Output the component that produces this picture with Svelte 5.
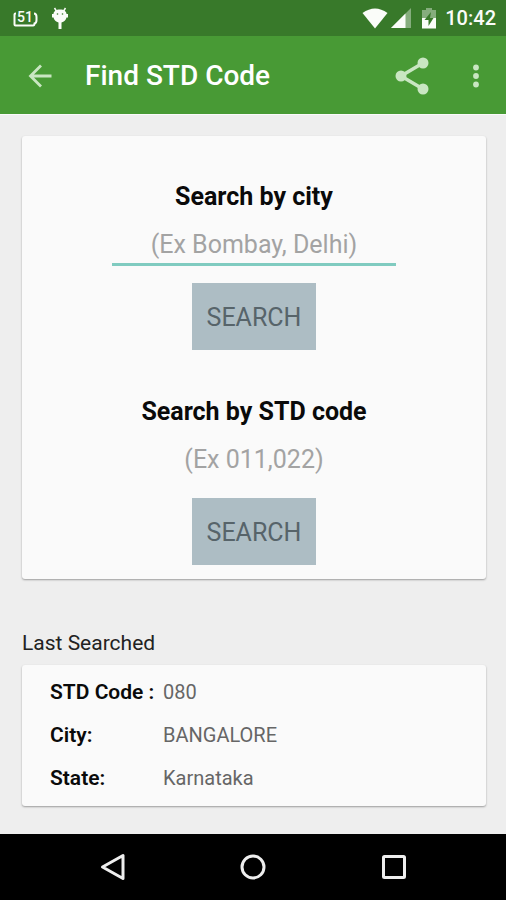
<script>
  let city = $state('')
  let code = $state('')

  // most recent lookup, shown below the search card
  let lastSearched = $state([
    { label: 'STD Code :', value: '080' },
    { label: 'City:', value: 'BANGALORE' },
    { label: 'State:', value: 'Karnataka' },
  ])
</script>

<div class="screen">
  <div class="status-bar">
    <div class="status-group">
      <svg class="speed" width="25" height="26" viewBox="0 0 25 26">
        <path
          d="M3 8.500H2.500Q1.500 8.500 1.500 9.500V19.500Q1.500 20.500 2.500 20.500H20Q21.500 20.500 21.500 18.500Q23.500 18 23.500 15V12Q23.500 8.500 21 8.500"
          fill="none"
          stroke="currentColor"
          stroke-width="2"
        />
        <text x="12" y="17" text-anchor="middle">51</text>
      </svg>
      <svg width="18" height="24" viewBox="0 0 18 24">
        <path
          d="M3.500 2L6 6M14.500 2L12 6"
          stroke="currentColor"
          stroke-width="1.500"
        />
        <path
          d="M9 3.500C13 3.500 15.500 5.500 15.500 8H17V11.500H15.500C15 14 13 16 10.500 16.500V23H7.500V16.500C5 16 3 14 2.500 11.500H1V8H2.500C2.500 5.500 5 3.500 9 3.500Z"
          fill="currentColor"
        />
        <circle cx="6.500" cy="8" r=".8" fill="#38792a" />
        <circle cx="11.500" cy="8" r=".8" fill="#38792a" />
      </svg>
    </div>
    <div class="status-group right">
      <svg width="26" height="21" viewBox="0 0 26 21">
        <path d="M13 20.500L.5 5Q13-4 25.500 5Z" fill="currentColor" />
      </svg>
      <svg width="20" height="21" viewBox="0 0 20 21">
        <path d="M20 0V20H0Z" fill="currentColor" opacity=".4" />
        <path d="M14.500 5.500V20H0Z" fill="currentColor" />
      </svg>
      <svg class="battery" width="14" height="21" viewBox="0 0 14 21">
        <path
          d="M4 0H10V2H14V10H0V2H4Z"
          fill="currentColor"
          opacity=".4"
        />
        <path d="M0 10H14V20.500H0Z" fill="currentColor" />
        <path d="M9 4L2.500 12H6.500V18L11.500 10H8Z" fill="#38792a" />
      </svg>
      <span class="clock">10:42</span>
    </div>
  </div>

  <header class="app-bar">
    <button class="icon-button" type="button" aria-label="Back">
      <svg width="24" height="24" viewBox="0 0 24 24">
        <path
          d="M23.500 12H3M13 1.500L2.500 12L13 22.500"
          fill="none"
          stroke="currentColor"
          stroke-width="2.800"
        />
      </svg>
    </button>
    <h1>Find STD Code</h1>
    <button class="icon-button share" type="button" aria-label="Share">
      <svg width="36" height="40" viewBox="0 0 36 40">
        <path
          d="M29 7L7 20L29 33"
          fill="none"
          stroke="currentColor"
          stroke-width="3.500"
        />
        <circle cx="29" cy="7" r="5.500" fill="currentColor" />
        <circle cx="7" cy="20" r="5.500" fill="currentColor" />
        <circle cx="29" cy="33" r="5.500" fill="currentColor" />
      </svg>
    </button>
    <button class="icon-button" type="button" aria-label="More options">
      <svg width="8" height="24" viewBox="0 0 8 24">
        <circle cx="4" cy="3.500" r="2.900" fill="currentColor" />
        <circle cx="4" cy="12" r="2.900" fill="currentColor" />
        <circle cx="4" cy="20.500" r="2.900" fill="currentColor" />
      </svg>
    </button>
  </header>

  <main>
    <div class="card search-card">
      <form onsubmit={(e) => e.preventDefault()}>
        <label for="city">Search by city</label>
        <input
          id="city"
          class="active"
          type="text"
          placeholder="(Ex Bombay, Delhi)"
          bind:value={city}
        />
        <button class="search-button" type="submit">SEARCH</button>
      </form>
      <form onsubmit={(e) => e.preventDefault()}>
        <label for="code">Search by STD code</label>
        <input
          id="code"
          type="text"
          inputmode="numeric"
          placeholder="(Ex 011,022)"
          bind:value={code}
        />
        <button class="search-button" type="submit">SEARCH</button>
      </form>
    </div>

    <h2>Last Searched</h2>
    <dl class="card result-card">
      {#each lastSearched as row}
        <div class="row">
          <dt>{row.label}</dt>
          <dd>{row.value}</dd>
        </div>
      {/each}
    </dl>
  </main>

  <nav class="nav-bar">
    <button type="button" aria-label="Navigate back">
      <svg width="28" height="28" viewBox="0 0 28 28">
        <path d="M25 2.500V25.500L4.500 14Z" />
      </svg>
    </button>
    <button type="button" aria-label="Home">
      <svg width="28" height="28" viewBox="0 0 28 28">
        <circle cx="14" cy="14" r="11" />
      </svg>
    </button>
    <button type="button" aria-label="Recent apps">
      <svg width="28" height="28" viewBox="0 0 28 28">
        <rect x="3.500" y="3.500" width="21" height="21" rx="1" />
      </svg>
    </button>
  </nav>
</div>

<style>
  :global(body) {
    margin: 0;
    background-color: #eeeeee;
  }

  .screen {
    min-height: 100vh;
    display: flex;
    flex-direction: column;
    font-family: Roboto, 'Liberation Sans', sans-serif;
    color: #0a0a0a;
  }

  svg {
    display: block;
  }

  button {
    font-family: inherit;
    border: none;
    cursor: pointer;
  }

  /* --- Bars --- */
  .status-bar {
    height: 36px;
    padding: 0 10px 0 13px;
    display: flex;
    justify-content: space-between;
    align-items: center;
    background-color: #38792a;
    color: #fafcf9;
  }

  .status-group {
    display: flex;
    align-items: center;
    gap: 13px;
  }

  .status-group.right {
    gap: 3px;
  }

  .speed text {
    font-size: 14px;
    font-weight: 500;
    fill: currentColor;
  }

  .battery {
    margin: 0 6px 0 8px;
  }

  .clock {
    font-size: 20px;
    font-weight: 500;
  }

  .app-bar {
    height: 79px;
    padding: 1px 18px 0 20px;
    display: flex;
    align-items: center;
    background-color: #489a35;
    color: #c9e6c2;
    border-bottom: 1px solid #fafafa;
    box-sizing: border-box;
  }

  .app-bar h1 {
    flex: 1;
    margin: 0 0 0 25px;
    font-size: 28px;
    font-weight: 500;
    color: #ffffff;
  }

  .icon-button {
    padding: 8px;
    background: none;
    color: inherit;
  }

  .share {
    margin-right: 26px;
  }

  .nav-bar {
    height: 66px;
    display: flex;
    justify-content: center;
    align-items: center;
    gap: 97px;
    background-color: #000000;
  }

  .nav-bar button {
    padding: 8px;
    background: none;
  }

  .nav-bar path,
  .nav-bar circle,
  .nav-bar rect {
    fill: none;
    stroke: #eeeeee;
    stroke-width: 3;
    stroke-linejoin: round;
  }

  /* --- Content --- */
  main {
    flex: 1;
    padding: 21px 20px 28px 22px;
  }

  .card {
    background-color: #fafafa;
    border-radius: 3px;
    box-shadow: 0 1px 2px rgba(0, 0, 0, 0.35);
  }

  .search-card {
    padding: 43px 20px 14px;
    display: flex;
    flex-direction: column;
    gap: 43px;
  }

  form {
    display: flex;
    flex-direction: column;
    align-items: center;
  }

  label {
    font-size: 25px;
    line-height: 36px;
    font-weight: 700;
  }

  input {
    width: 67%;
    height: 51px;
    padding: 11px 0 0;
    box-sizing: border-box;
    border: none;
    border-bottom: 3px solid transparent;
    outline: none;
    background: none;
    font-family: inherit;
    font-size: 25px;
    text-align: center;
    color: #0a0a0a;
  }

  input.active {
    border-bottom-color: #80cbc0;
  }

  input::placeholder {
    color: #a3a3a3;
    opacity: 1;
  }

  .search-button {
    height: 67px;
    margin-top: 17px;
    padding: 2px 15px 0;
    background-color: #adbdc4;
    color: #57646a;
    font-size: 25px;
  }

  .search-card form + form {
    padding-top: 1px;
  }

  h2 {
    margin: 50px 0 8px;
    font-size: 21px;
    line-height: 28px;
    font-weight: 400;
    color: #222222;
  }

  .result-card {
    margin: 0;
    padding: 6px 28px;
  }

  .row {
    display: grid;
    grid-template-columns: 113px 1fr;
    line-height: 43px;
    font-size: 20px;
  }

  dt {
    font-size: 21px;
    font-weight: 600;
  }

  dd {
    margin: 0;
    color: #666666;
  }
</style>
